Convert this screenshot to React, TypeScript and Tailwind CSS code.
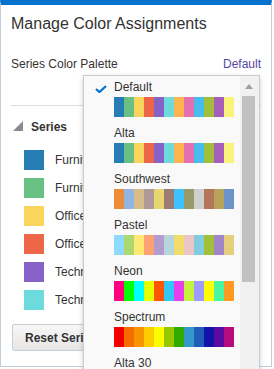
import React from "react";

const palettes: { name: string; colors: string[] }[] = [
  {
    name: "Default",
    colors: ["#267db3", "#68c182", "#fad55c", "#ed6647", "#8561c8", "#6ddbdb", "#ffb54d", "#e371b2", "#47bdef", "#a2bf39", "#a75dba", "#f7f37b"],
  },
  {
    name: "Alta",
    colors: ["#267db3", "#68c182", "#fad55c", "#ed6647", "#8561c8", "#6ddbdb", "#ffb54d", "#e371b2", "#47bdef", "#a2bf39", "#a75dba", "#f7f37b"],
  },
  {
    name: "Southwest",
    colors: ["#ef8c3c", "#92b4e0", "#d8bd88", "#b09a98", "#e8d670", "#9c7b70", "#3ec2ff", "#989a6a", "#cfcfcf", "#b57558", "#b7a45a", "#6b93c9"],
  },
  {
    name: "Pastel",
    colors: ["#8fd9fd", "#acd96f", "#fee974", "#fda272", "#b39bce", "#b6d6de", "#f0db6c", "#ebc6c6", "#83ccdf", "#a2bf39", "#a185c9", "#e5ce7e"],
  },
  {
    name: "Neon",
    colors: ["#ff0080", "#00ff00", "#00ffff", "#e6ff00", "#ff5500", "#34c6f5", "#e83ef0", "#c5f23c", "#9f9cff", "#ffff00", "#49f7a3", "#ff9922"],
  },
  {
    name: "Spectrum",
    colors: ["#f20000", "#f76c00", "#f79500", "#fccc00", "#fdfd00", "#96c800", "#33aa00", "#3399cc", "#1f5db8", "#1313a8", "#5b0ca0", "#b60a7f"],
  },
  {
    name: "Alta 30",
    colors: ["#267db3", "#68c182", "#fad55c", "#ed6647", "#8561c8", "#6ddbdb", "#ffb54d", "#e371b2", "#47bdef", "#a2bf39", "#a75dba", "#f7f37b"],
  },
];

const series = [
  { color: "#267db3", label: "Furniture East" },
  { color: "#68c182", label: "Furniture West" },
  { color: "#fad55c", label: "Office Supplies East" },
  { color: "#ed6647", label: "Office Supplies West" },
  { color: "#8561c8", label: "Technology East" },
  { color: "#6ddbdb", label: "Technology West" },
];

export default function App() {
  return (
    <div className="relative w-[274px] h-[369px] overflow-hidden bg-white font-['Liberation_Sans',Arial,sans-serif] text-[#333333]">
      <div className="box-border w-[272px] h-[367px] border-t-[5px] border-t-[#0572ce] border-x border-b border-x-[#c4ced7] border-b-[#c4ced7] pt-[10px] px-[10px]">
        <div className="text-[16px] leading-[18px] whitespace-nowrap">Manage Color Assignments</div>
        <div className="mt-[24px] flex justify-between text-[12px] leading-[14px]">
          <span>Series Color Palette</span>
          <span className="text-[#5247a3]">Default</span>
        </div>
        <div className="mt-[34px] h-px bg-[#d6dfe6]" />
        <div className="mt-[14px] flex h-[14px] items-start">
          <svg width="10" height="10" viewBox="0 0 10 10" className="ml-[2px] mt-[1px]">
            <polygon points="10,0 10,10 0,10" fill="#8a8a8a" />
          </svg>
          <span className="ml-[8px] text-[12px] leading-[14px] font-bold">Series</span>
        </div>
        <div className="w-[72px] overflow-hidden">
          <div className="mt-[16px] flex flex-col gap-[8px] pl-[13px]">
            {series.map((s) => (
              <div key={s.label} className="flex items-center h-[20px]">
                <div className="w-[20px] h-[20px] shrink-0" style={{ backgroundColor: s.color }} />
                <span className="ml-[11px] text-[12px] leading-[14px] whitespace-nowrap">{s.label}</span>
              </div>
            ))}
          </div>
          <button className="mt-[14px] ml-[1px] h-[27px] px-[12px] rounded-[2px] border border-[#c4ced7] bg-gradient-to-b from-[#f7f7f7] to-[#e6e6e6] text-[12px] leading-[14px] font-bold text-[#333333] whitespace-nowrap">
            Reset Series Colors
          </button>
        </div>
      </div>

      <div className="absolute left-[83px] top-[75px] w-[177px] h-[320px] border border-[#c4ced7] bg-[#f9f9f9] shadow-[0_2px_5px_rgba(0,0,0,0.2)] flex">
        <div className="flex-1 flex flex-col">
          {palettes.map((p, i) => (
            <div key={p.name} className="flex pt-[4px] pb-[5px]">
              <div className="w-[30px] shrink-0">
                {i === 0 && (
                  <svg width="12" height="8" viewBox="0 0 12 8" className="ml-[11px] mt-[5px]">
                    <path d="M1 4 L4.5 7 L11 1" fill="none" stroke="#0572ce" strokeWidth="2.3" strokeLinejoin="miter" />
                  </svg>
                )}
              </div>
              <div className="flex flex-col">
                <div className="text-[12px] leading-[14px] text-[#333333]">{p.name}</div>
                <div className="mt-[3px] flex">
                  {p.colors.map((c, j) => (
                    <div key={j} className="w-[10px] h-[20px]" style={{ backgroundColor: c }} />
                  ))}
                </div>
              </div>
            </div>
          ))}
        </div>
        <div className="w-[19px] shrink-0 bg-[#f1f1f1] flex flex-col">
          <div className="h-[20px] flex items-center justify-center">
            <svg width="8" height="5" viewBox="0 0 8 5" className="-ml-[2px]">
              <polygon points="4,0 8,5 0,5" fill="#a89c9c" />
            </svg>
          </div>
          <div className="ml-[2px] w-[13px] h-[186px] bg-[#c1c1c1]" />
        </div>
      </div>
    </div>
  );
}
